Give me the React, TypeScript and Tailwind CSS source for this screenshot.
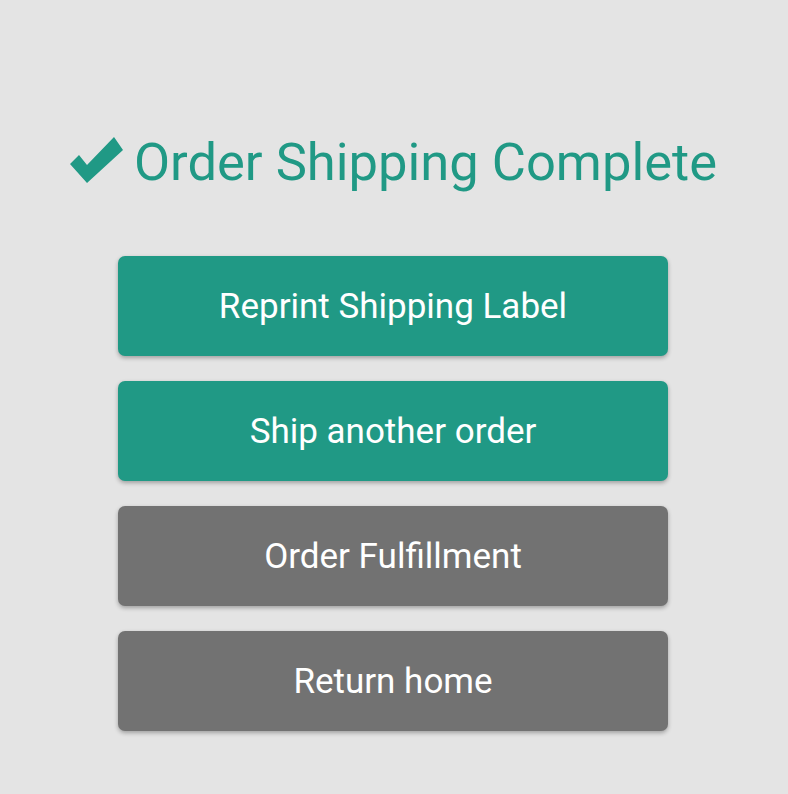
export default function App() {
  const buttons = [
    { label: 'Reprint Shipping Label', color: 'bg-[#209985]' },
    { label: 'Ship another order', color: 'bg-[#209985]' },
    { label: 'Order Fulfillment', color: 'bg-[#727272]' },
    { label: 'Return home', color: 'bg-[#727272]' },
  ];

  return (
    <div className="min-h-[794px] w-full bg-[#e4e4e4] font-['Roboto',sans-serif] flex flex-col items-center">
      {/* Header */}
      <div className="mt-[130px] flex items-center gap-[11px] text-[#209985] mr-[2px]">
        <svg width="54" height="46" viewBox="0 0 54 46" className="mt-[-4px]">
          <path d="M1 27 L10 18 L18 28 L45 0 L54 13 L18 46 Z" fill="#209985" />
        </svg>
        <h1 className="text-[52.5px] leading-[64px] font-normal">Order Shipping Complete</h1>
      </div>

      {/* Actions */}
      <div className="mt-[62px] flex flex-col gap-[25px] mr-[2px]">
        {buttons.map(b => (
          <button
            key={b.label}
            className={`${b.color} w-[550px] h-[100px] pt-[3px] rounded-[7px] text-white text-[35px] shadow-[0_2px_4px_rgba(0,0,0,0.3)] cursor-pointer`}
          >
            {b.label}
          </button>
        ))}
      </div>
    </div>
  );
}
